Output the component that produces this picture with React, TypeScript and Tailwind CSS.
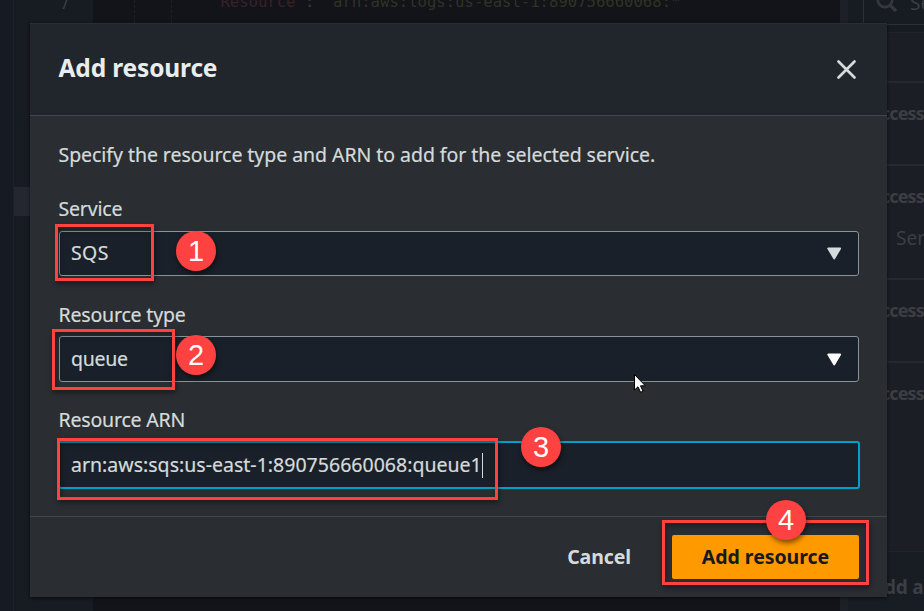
import React from "react";

const sans = "font-['Noto_Sans','Open_Sans',sans-serif]";

function Frame({ className }: { className: string }) {
  return (
    <div
      className={`pointer-events-none absolute border-[3px] border-[#fe4141] shadow-[1px_3px_5px_rgba(0,0,0,0.4),inset_1px_3px_5px_rgba(0,0,0,0.35)] ${className}`}
    />
  );
}

function Badge({ n, className }: { n: number; className: string }) {
  return (
    <div
      className={`absolute flex size-10 items-center justify-center rounded-full bg-[#fe4141] font-['Liberation_Sans',sans-serif] text-[29px] leading-none text-white shadow-[1px_3px_5px_rgba(0,0,0,0.5)] ${className}`}
    >
      {n}
    </div>
  );
}

function Label({ children, className }: { children: React.ReactNode; className: string }) {
  return (
    <label className={`block h-6 text-[19.5px] leading-6 tracking-[-0.18px] whitespace-nowrap text-[#d5dbdb] ${className}`}>
      {children}
    </label>
  );
}

function Select({
  value,
  tone,
  className,
  textClass,
}: {
  value: string;
  tone: string;
  className: string;
  textClass: string;
}) {
  return (
    <div
      className={`flex items-center justify-between rounded-[3px] border border-[#879596] bg-[#1a2029] pr-[16px] pl-[11px] text-[19.5px] leading-6 text-[#d5dbdb] ${className}`}
    >
      <span className={textClass}>{value}</span>
      <svg width="16" height="13" viewBox="0 0 16 13" className={tone}>
        <path d="M2.2 1.5H14.2L8.2 11.5Z" fill="currentColor" stroke="currentColor" strokeWidth="1.8" strokeLinejoin="round" />
      </svg>
    </div>
  );
}

function Statement({ className, children }: { className: string; children: React.ReactNode }) {
  return <div className={`shrink-0 border-b-2 border-[#27292d] ${className}`}>{children}</div>;
}

function Background() {
  const row = "text-[18px] leading-6 font-bold tracking-[-0.8px] whitespace-nowrap";
  return (
    <div className="flex h-full text-[#3b3e44]">
      <div className="w-[14px] border-r border-[#1d2025] bg-[#161a22]" />
      <div className="w-[79px] bg-[#171b22]">
        <div className="flex h-[187px] pl-[46px] font-['DejaVu_Sans_Mono',monospace] text-[15.6px]">
          <div className="-mt-[8px] leading-6">7</div>
        </div>
        <div className="h-[29px] bg-[#24272f]" />
      </div>
      <div className="w-[747px] overflow-hidden bg-[#131419]">
        <div className="flex h-[23px]">
          <div className="ml-[41px] w-[37px] border-l border-dashed border-[#1f2025]" />
          <div className="w-[40px] border-l border-dashed border-[#1f2025]" />
          <pre className="-mt-[10px] font-['DejaVu_Sans_Mono',monospace] text-[15.6px] leading-6">
            <span className="text-[#3b2028]">"Resource"</span>
            <span className="text-[#35383d]">: </span>
            <span className="text-[#2f3324]">"arn:aws:logs:us-east-1:890756660068:*"</span>
          </pre>
        </div>
      </div>
      <div className="w-2 bg-[#1d2027]" />
      <div className="flex w-[76px] flex-col overflow-hidden bg-[#1b1e25]">
        <div className="h-[33px] shrink-0 border-b border-[#202329] bg-[#171b22] pl-[15px]">
          <div className="flex h-[25px] w-[200px] border-b border-l border-[#2c2f33] pl-3">
            <svg width="22" height="22" viewBox="0 0 22 22" className="-mt-[9px] shrink-0" fill="none" stroke="#34373c">
              <circle cx="9" cy="9" r="7.2" strokeWidth="2.8" />
              <path d="M14 14L20 20" strokeWidth="3.4" />
            </svg>
            <span className="-mt-[9px] ml-[12px] text-[19px] leading-6">Search</span>
          </div>
        </div>
        <Statement className="h-[50px]">{null}</Statement>
        <Statement className="h-[83px] pt-[18px] pl-[21px]">
          <div className={row}>Access level</div>
        </Statement>
        <Statement className="h-[114px] pt-[18px] pl-[21px]">
          <div className={row}>Access level</div>
          <div className="mt-[18px] pl-[27px] text-[19px] leading-6">Service</div>
        </Statement>
        <Statement className="h-[83px] pt-[18px] pl-[21px]">
          <div className={row}>Access level</div>
        </Statement>
        <div className="h-[188px] shrink-0 pt-[18px] pl-[21px]">
          <div className={row}>Access level</div>
        </div>
        <div className="flex-1 border-t border-[#202329] bg-[#181c23] pt-[23px] pl-[23px]">
          <div className="text-[19px] leading-6 font-bold tracking-[-0.2px] whitespace-nowrap">Add a resource</div>
        </div>
      </div>
    </div>
  );
}

export default function App() {
  return (
    <div className={`relative h-[611px] w-[924px] overflow-hidden bg-[#171b22] ${sans}`}>
      <Background />

      <section className="absolute top-[23px] left-[30px] flex h-[574px] w-[857px] flex-col bg-[#2a2d32] shadow-[0_1px_3px_rgba(0,0,0,0.6)]">
        <header className="flex h-[93px] items-center justify-between border-t border-b border-t-[#2a2e33] border-b-[#414750] bg-[#21252c] pr-[29px] pl-[28.5px]">
          <h2 className="pb-[3px] text-[24.5px] leading-8 font-bold tracking-[-0.15px] whitespace-nowrap text-[#eaeded]">
            Add resource
          </h2>
          <svg width="23" height="23" viewBox="0 0 23 23" fill="none" stroke="#d5dbdb" strokeWidth="2.7" strokeLinecap="round">
            <path d="M3.5 3.5L19.5 19.5M19.5 3.5L3.5 19.5" />
          </svg>
        </header>

        <div className="h-[400px] pt-[27px] pr-[27px] pl-[28px] text-[#d5dbdb] [-webkit-text-stroke:0.2px]">
          <p className="pl-[0.5px] text-[19.5px] leading-6 tracking-[-0.05px] whitespace-nowrap">
            Specify the resource type and ARN to add for the selected service.
          </p>
          <Label className="mt-[30px] pl-[0.5px]">Service</Label>
          <Select
            value="SQS"
            tone="text-[#d5dbdb]"
            className="mt-[10px] mr-px ml-px h-[45px]"
            textClass="pb-px tracking-[0.4px]"
          />
          <Label className="mt-[27px] pl-[0.5px]">Resource type</Label>
          <Select
            value="queue"
            tone="text-[#fafafa]"
            className="mt-[9px] mr-px ml-px h-[46px]"
            textClass="tracking-[-0.3px]"
          />
          <Label className="mt-[26px] pl-[0.5px]">Resource ARN</Label>
          <div className="mt-[9px] flex h-12 items-center rounded-[3px] border-2 border-[#00a1c9] bg-[#1a2029] pl-[11px] text-[19.5px] leading-6">
            <span className="tracking-[0.02px]">arn:aws:sqs:us-east-1:890756660068:queue1</span>
            <span className="h-[25px] w-px bg-[#d5dbdb]" />
          </div>
        </div>

        <footer className="flex flex-1 items-center justify-end border-t border-[#414549] pr-7 text-[19.5px] font-bold">
          <button className="mr-[41px] tracking-[-0.1px] text-[#d5dbdb]">Cancel</button>
          <button className="h-11 w-[187px] rounded-[2px] bg-[#ff9900] tracking-[-0.05px] text-[#16191f]">Add resource</button>
        </footer>
      </section>

      <Frame className="top-[224px] left-[55px] h-[57px] w-[99px]" />
      <Frame className="top-[329px] left-[52px] h-[61px] w-[123px]" />
      <Frame className="top-[438px] left-[57px] h-[62px] w-[441px]" />
      <Frame className="top-[520px] left-[662px] h-[65px] w-[207px]" />
      <Badge n={1} className="top-[231px] left-[176px]" />
      <Badge n={2} className="top-[335px] left-[176px]" />
      <Badge n={3} className="top-[427px] left-[521px]" />
      <Badge n={4} className="top-[500px] left-[766px]" />

      <svg className="absolute top-[373px] left-[633px]" width="14" height="21" viewBox="0 0 14 21">
        <path d="M1.5 1.5V17L5 13.8L7.6 19.3L10 18.2L7.5 12.8H12.3Z" fill="#fff" stroke="#000" strokeWidth="1" />
      </svg>
    </div>
  );
}
